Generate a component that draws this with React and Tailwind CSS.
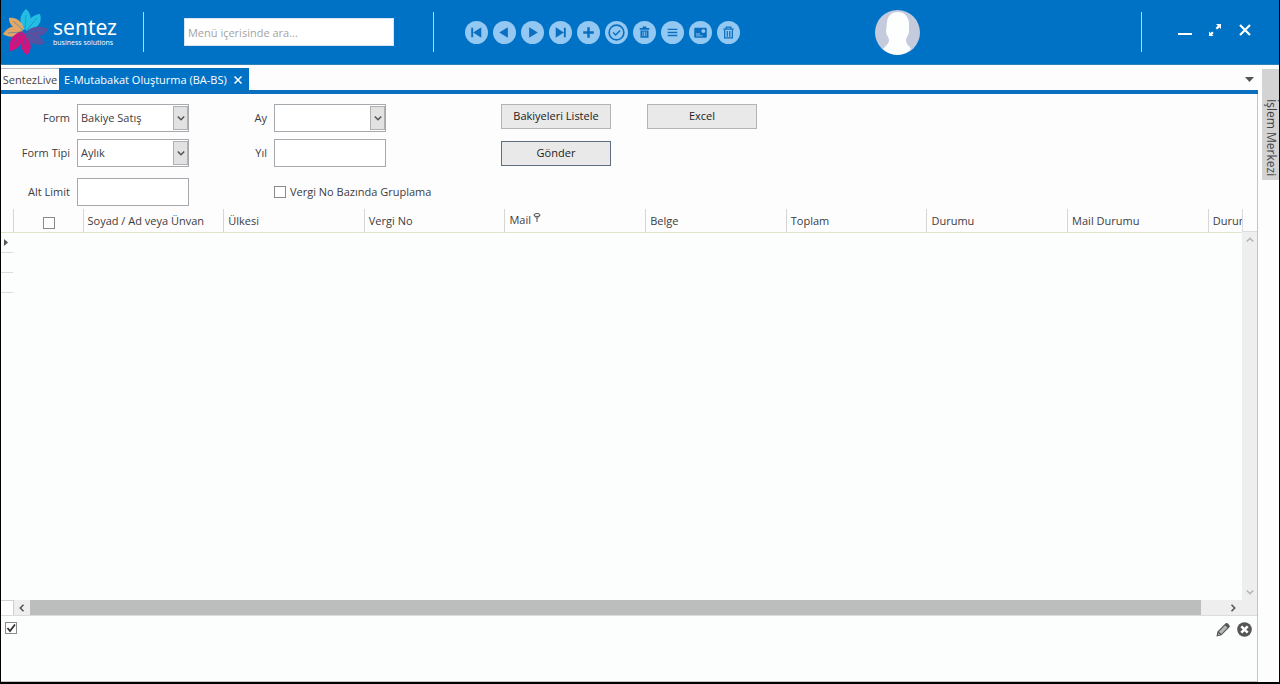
import { useState } from "react";
import clsx from "clsx";

const TOOLBAR = [
  { label: "İlk Kayıt", glyph: <path d="M6.5 7h2v10h-2zM17 6.5v11L8.5 12z" /> },
  { label: "Önceki Kayıt", glyph: <path d="M15.5 6.5v11L6.5 12z" /> },
  { label: "Sonraki Kayıt", glyph: <path d="M8.5 6.5v11l9-5.500z" /> },
  { label: "Son Kayıt", glyph: <path d="M15.500 7h2v10h-2zM7 6.5v11l8.500-5.500z" /> },
  { label: "Yeni", glyph: <path d="M10.700 6.500h2.600v4.200h4.200v2.600h-4.200v4.200h-2.600v-4.200H6.500v-2.600h4.200z" /> },
  {
    label: "Kaydet",
    glyph: (
      <g fill="none" stroke="currentColor">
        <circle cx="12" cy="12" r="7.700" strokeWidth="1.700" />
        <path d="M8.500 12l2.600 2.600 4.700-4.700" strokeWidth="1.600" />
      </g>
    )
  },
  {
    label: "Sil",
    glyph: (
      <>
        <path d="M10 5.700h4v1.600h3v1.700H7V7.300h3zM7.800 9.800h8.400v7.700H7.800z" />
        <path d="M10.300 11v5M12 11v5M13.700 11v5" stroke="#93c8f3" strokeWidth=".8" />
      </>
    )
  },
  { label: "Liste", glyph: <path d="M7 8h10v1.500H7zM7 11.200h10v1.500H7zM7 14.400h10v1.500H7z" /> },
  {
    label: "Kart",
    glyph: (
      <>
        <rect x="5.500" y="7" width="13" height="10.500" rx="1" />
        <path d="M7.300 13h4.200v1H7.300zM7.300 15h7v1h-7z" fill="#93c8f3" />
        <circle cx="15" cy="10.500" r="2" fill="#93c8f3" />
      </>
    )
  },
  {
    label: "Temizle",
    glyph: (
      <g fill="none" stroke="currentColor" strokeWidth="1.300">
        <path d="M6.500 8.500h11M9.500 8V6.300h5V8M8 9.500v8h8v-8M10.700 10.500v6M13.300 10.500v6" />
      </g>
    )
  }
];

const COLUMNS = [
  "Soyad / Ad veya Ünvan",
  "Ülkesi",
  "Vergi No",
  "Mail",
  "Belge",
  "Toplam",
  "Durumu",
  "Mail Durumu",
  "Durumu"
];

const fieldClass = "h-7 w-28 border border-[#a6a9ae] bg-white px-[3px] text-[11px] text-[#3c3c3c] outline-none";
const buttonClass = "h-[25px] w-[110px] border bg-[#e9e9e9] text-[11px] text-[#222]";

function Logo() {
  return (
    <a href="#" className="flex items-center gap-[5px] text-white">
      <svg viewBox="0 0 45 46" className="h-[46px] w-[45px]">
        <g fill="#23bfe2">
          <path d="M20 20C15 12 18 4 23 0c6 5 6 12 0 21z" />
          <path d="M23 22C22 12 29 6 37 5c3 8-3 16-14 17z" />
        </g>
        <g fill="#e3a765">
          <path d="M21 21C19 12 13 8 6 9c0 7 5 12 15 12z" />
          <path d="M20 22C13 15 5 17 0 25c6 4 14 4 20-3z" />
        </g>
        <g fill="#d3127c">
          <path d="M19 22C9 25 5 33 7 42c8-1 14-8 12-20z" />
          <path d="M19 23c-3 9-2 18 5 23 6-6 5-15-5-23z" />
        </g>
        <g fill="#5b4f9f">
          <path d="M23 23c7-7 15-6 22-3-3 8-13 9-22 3z" />
          <path d="M21 24c8-1 16 2 21 10-8 4-17 1-21-10z" />
        </g>
        <path d="M23 22L34 9M22 20l1-14M20 21L10 12M19 23L5 24M18 25l-8 12M20 26l3 14M25 23l16-2M24 25l14 8" stroke="#0a72c4" strokeWidth=".5" />
      </svg>
      <span className="flex flex-col pb-0.5">
        <span className="font-['Noto_Sans'] text-[21px] leading-6">sentez</span>
        <span className="text-[7px] leading-2">business solutions</span>
      </span>
    </a>
  );
}

function Divider() {
  return <span className="h-10 w-px shrink-0 bg-[#b5d7f2]" />;
}

function Header() {
  return (
    <header className="flex h-[65px] items-center border-b border-[#2f83b5] bg-[#0072c6] pl-0.5">
      <Logo />
      <div className="flex grow items-center pl-[26px]">
        <Divider />
        <input
          aria-label="Menü içerisinde ara"
          placeholder="Menü içerisinde ara..."
          className="ml-10 h-7 w-[210px] border border-[#d7e6f2] bg-white px-[3px] text-[11px] outline-none placeholder:text-[#a3a3a3]"
        />
        <span className="ml-[39px] flex">
          <Divider />
        </span>
        <div className="ml-[31px] flex gap-[5px]">
          {TOOLBAR.map((item) => (
            <button key={item.label} type="button" aria-label={item.label} className="size-[23px] rounded-full bg-[#93c8f3] text-[#0a6fc0]">
              <svg viewBox="0 0 24 24" fill="currentColor" className="size-[23px]">
                {item.glyph}
              </svg>
            </button>
          ))}
        </div>
      </div>
      <button type="button" aria-label="Profil" className="mr-[221px] size-[45px] shrink-0 overflow-hidden rounded-full bg-[#c3cbdc]">
        <svg viewBox="0 0 45 45" fill="#fdfefe">
          <path d="M12 12C13 5 17 2 23 2s10 4 11 10v10c0 3-3 5-3 8 0 5 4 6 5 9-4 4-9 6-14 6S12 43 8 39c2-3 6-5 6-9 0-3-3-5-3-8z" />
        </svg>
      </button>
      <Divider />
      <div className="mr-[27px] mb-1 ml-9 flex items-center gap-4 text-white">
        <button type="button" aria-label="Küçült">
          <svg viewBox="0 0 14 14" className="size-[14px]">
            <path d="M0 11h14" stroke="currentColor" strokeWidth="2" />
          </svg>
        </button>
        <button type="button" aria-label="Tam Ekran">
          <svg viewBox="0 0 14 14" className="size-[14px]" fill="currentColor">
            <path d="M8 1h5v5l-1.600-1.600-2.300 2.200-1.500-1.500 2.200-2.300zM1 8.500v4.500h4.500l-1.400-1.400 1.600-1.600-1.500-1.500-1.700 1.600z" />
          </svg>
        </button>
        <button type="button" aria-label="Kapat">
          <svg viewBox="0 0 14 14" className="size-[14px]">
            <path d="M2 2l10 10M12 2L2 12" stroke="currentColor" strokeWidth="2.200" />
          </svg>
        </button>
      </div>
    </header>
  );
}

function Tabs() {
  return (
    <nav className="flex h-[29px] items-end border-b-4 border-[#0b6fc0] text-[11px]">
      <button type="button" className="h-[22px] w-[58px] border-t border-[#b9bcc4] pt-0.5 text-[#444]">
        SentezLive
      </button>
      <div className="flex h-[22px] items-center bg-[#0072c6] text-white">
        <button type="button" className="pt-0.5 pl-[5px]">E-Mutabakat Oluşturma (BA-BS)</button>
        <button type="button" aria-label="Sekmeyi Kapat" className="px-[7px] pt-0.5">
          <svg viewBox="0 0 8 8" className="size-2">
            <path d="M.5.5l7 7M7.500.5l-7 7" stroke="currentColor" strokeWidth="1.500" />
          </svg>
        </button>
      </div>
      <button type="button" aria-label="Sekmeler" className="mr-1 ml-auto pb-2 text-[#555]">
        <svg viewBox="0 0 9 5" className="h-[5px] w-[9px]" fill="currentColor">
          <path d="M0 0h9L4.500 5z" />
        </svg>
      </button>
    </nav>
  );
}

function Chevron({ className, d }) {
  return (
    <svg viewBox="0 0 8 8" className={clsx("size-2", className)} fill="none" stroke="currentColor" strokeWidth="1.600">
      <path d={d} />
    </svg>
  );
}

function SelectField({ id, label, options }) {
  return (
    <>
      <label htmlFor={id} className="text-right">{label}</label>
      <div className="relative w-28">
        <select id={id} className={clsx(fieldClass, "block appearance-none")}>
          {options.map((option) => (
            <option key={option}>{option}</option>
          ))}
        </select>
        <span className="pointer-events-none absolute inset-y-0.5 right-px flex w-[15px] items-center justify-center border border-[#b0b0b0] bg-[#e2e2e2] text-[#555]">
          <Chevron d="M.8 2.500L4 5.700l3.200-3.200" />
        </span>
      </div>
    </>
  );
}

function TextField({ id, label }) {
  return (
    <>
      <label htmlFor={id} className="text-right">{label}</label>
      <input id={id} className={fieldClass} />
    </>
  );
}

function FilterForm() {
  const [grouped, setGrouped] = useState(false);

  return (
    <form className="flex items-start pt-2.5 pb-[3px]" onSubmit={(event) => event.preventDefault()}>
      <div className="grid grid-cols-[69px_112px] items-center gap-x-[7px] gap-y-[7px]">
        <SelectField id="form" label="Form" options={["Bakiye Satış", "Bakiye Alış"]} />
        <SelectField id="formTipi" label="Form Tipi" options={["Aylık", "Yıllık"]} />
        <div className="col-span-2 grid grid-cols-subgrid items-center pt-1">
          <TextField id="altLimit" label="Alt Limit" />
        </div>
      </div>
      <div className="ml-[58px] grid grid-cols-[20px_auto] items-center gap-x-[7px] gap-y-[7px]">
        <SelectField id="ay" label="Ay" options={[""]} />
        <TextField id="yil" label="Yıl" />
        <label className="col-start-2 flex h-8 w-[153px] items-center gap-1 pt-1 whitespace-nowrap">
          <input
            type="checkbox"
            checked={grouped}
            onChange={(event) => setGrouped(event.target.checked)}
            className="size-3 shrink-0 appearance-none border border-[#8a8a8a] bg-white checked:bg-[#555]"
          />
          Vergi No Bazında Gruplama
        </label>
      </div>
      <div className="ml-[74px] grid grid-cols-2 gap-x-9 gap-y-3">
        <button type="button" className={clsx(buttonClass, "border-[#b4b4b4]")}>Bakiyeleri Listele</button>
        <button type="button" className={clsx(buttonClass, "border-[#b4b4b4]")}>Excel</button>
        <button type="submit" className={clsx(buttonClass, "border-[#5f6f80]")}>Gönder</button>
      </div>
    </form>
  );
}

function Grid() {
  return (
    <div className="flex grow flex-col">
      <div className="flex grow">
        <div className="w-0 grow overflow-hidden bg-[#fcfefd]">
          <table className="w-[1348px] table-fixed border-collapse text-left">
            <thead className="border-b border-[#dfe5c8] bg-[#fefdfe]">
              <tr className="h-[23px]">
                <th className="w-3" />
                <th className="w-[70px] border-l border-[#d6d6d6] p-0 text-center">
                  <input
                    type="checkbox"
                    aria-label="Tümünü Seç"
                    className="mt-1 ml-0.5 size-3 appearance-none border border-[#8a8a8a] bg-white align-middle checked:bg-[#555]"
                  />
                </th>
                {COLUMNS.map((column, index) => (
                  <th key={index} className="border-l border-[#d6d6d6] p-0 pt-0.5 pl-1 font-normal whitespace-nowrap">
                    {column}
                    {column === "Mail" ? (
                      <svg viewBox="0 0 8 9" className="mb-2 ml-0.5 inline h-[9px] w-2" fill="none" stroke="#555">
                        <ellipse cx="4" cy="2" rx="3" ry="1.500" />
                        <path d="M1.200 2.500L4 5.500l2.800-3M4 5v4" />
                      </svg>
                    ) : null}
                  </th>
                ))}
              </tr>
            </thead>
            <tbody>
              {[0, 1, 2].map((row) => (
                <tr key={row} className="h-5">
                  <td className="border-b border-[#dcdcdc] p-0 pl-[3px]">
                    {row === 0 ? (
                      <svg viewBox="0 0 4 7" className="h-[7px] w-1" fill="#555">
                        <path d="M0 0l4 3.500L0 7z" />
                      </svg>
                    ) : null}
                  </td>
                  <td colSpan={COLUMNS.length + 1} />
                </tr>
              ))}
            </tbody>
          </table>
        </div>
        <div className="flex w-[15px] flex-col">
          <div className="h-[23px] border-b border-l border-[#dcdcdc]" />
          <div className="flex grow flex-col items-center justify-between bg-[#eeeeee] py-1 text-[#b5b5b5]">
            <Chevron d="M.8 5.500L4 2.300l3.200 3.200" />
            <Chevron d="M.8 2.500L4 5.700l3.200-3.200" />
          </div>
        </div>
      </div>
      <div className="flex h-4 items-center border-b border-[#dcdcdc] bg-[#eeeeee] text-[#555]">
        <span className="h-full w-[13px] border-t border-r border-[#d0d0d0] bg-white" />
        <Chevron className="mx-1" d="M5.500.8L2.300 4l3.200 3.200" />
        <span className="h-full grow bg-[#bcbebd]" />
        <Chevron className="mr-5 ml-7" d="M2.500.8L5.700 4 2.500 7.200" />
      </div>
    </div>
  );
}

function FilterBar() {
  const [active, setActive] = useState(true);

  return (
    <footer className="flex h-[65px] items-start bg-[#fcfefd] px-1 pt-1.5">
      <label className="relative flex">
        <input
          type="checkbox"
          aria-label="Filtre"
          checked={active}
          onChange={(event) => setActive(event.target.checked)}
          className="size-3 appearance-none border border-[#8a8a8a] bg-white"
        />
        {active ? (
          <svg viewBox="0 0 12 12" className="pointer-events-none absolute inset-0 size-3" fill="none" stroke="#333" strokeWidth="1.800">
            <path d="M2.500 6l2.500 3L10 2.500" />
          </svg>
        ) : null}
      </label>
      <div className="ml-auto flex items-center gap-1.5 text-[#555]">
        <button type="button" aria-label="Filtreyi Düzenle">
          <svg viewBox="0 0 15 15" className="size-[15px]" fill="#b8b8b8" stroke="currentColor" strokeWidth="1.200">
            <path d="M1.200 13.800l.8-4L9.600 2.200c1.400-1.400 4.500 1.400 3.200 3L5.200 12.800zM2 9.800l3.200 3" />
            <path d="M9.600 2.200l3.200 3" strokeWidth="2.400" />
          </svg>
        </button>
        <button type="button" aria-label="Filtreyi Temizle" className="mr-px">
          <svg viewBox="0 0 15 15" className="size-[15px]">
            <circle cx="7.500" cy="7.500" r="7.300" fill="currentColor" />
            <path d="M4.300 4.300l6.400 6.400M10.700 4.300l-6.400 6.400" stroke="#fff" strokeWidth="2.600" />
          </svg>
        </button>
      </div>
    </footer>
  );
}

function App() {
  return (
    <div className="flex min-h-screen flex-col border-x border-b-2 border-black bg-[#fefdfe] font-['Open_Sans','Noto_Sans',sans-serif] text-[11px] text-[#3c3c3c]">
      <Header />
      <div className="flex grow">
        <main className="flex grow flex-col">
          <Tabs />
          <div className="flex grow flex-col border-r border-b border-[#c4c4c4]">
            <FilterForm />
            <Grid />
            <FilterBar />
          </div>
        </main>
        <aside className="flex w-[21px] items-start justify-end pt-1">
          <button type="button" className="flex h-[111px] w-[17px] items-center justify-end bg-[#d3d3d4] pb-1 text-xs text-[#444] [writing-mode:vertical-rl]">
            İşlem Merkezi
          </button>
        </aside>
      </div>
    </div>
  );
}

export default App;
